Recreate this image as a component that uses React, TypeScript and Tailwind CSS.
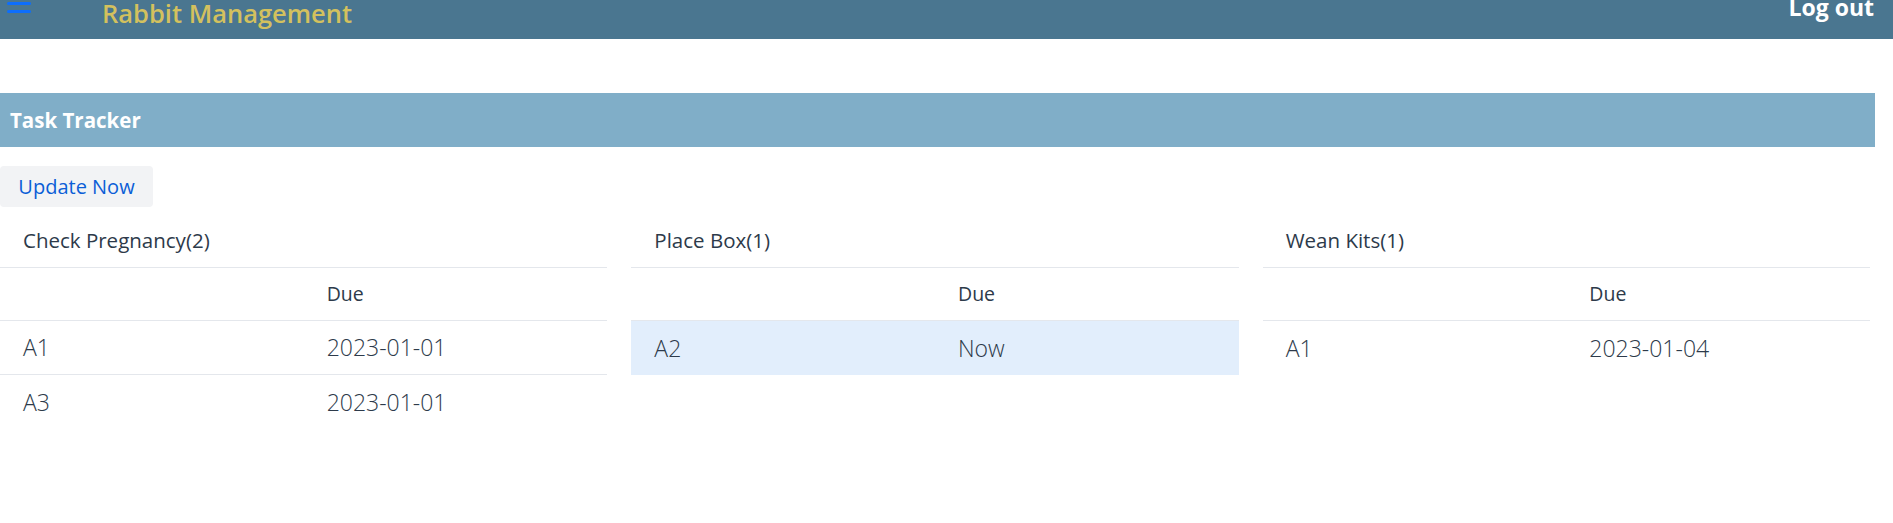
const tasks = [
  { title: "Check Pregnancy(2)", rows: [["A1", "2023-01-01"], ["A3", "2023-01-01"]] },
  { title: "Place Box(1)", rows: [["A2", "Now"]], highlight: true },
  { title: "Wean Kits(1)", rows: [["A1", "2023-01-04"]] },
];

function TaskTable({ title, rows, highlight }: { title: string; rows: string[][]; highlight?: boolean }) {
  return (
    <div className="text-[#2d3a4a]">
      <div className="h-[54px] flex items-center px-[23px] text-[20.5px] border-b border-[#e4e7ec]">{title}</div>
      <div className="h-[53px] grid grid-cols-2 items-center border-b border-[#e4e7ec] text-[19.5px]">
        <div className="px-[23px]" />
        <div className="px-[23px]">Due</div>
      </div>
      {rows.map((r, i) => (
        <div
          key={i}
          className={`h-[54px] grid grid-cols-2 items-center text-[23px] font-light ${
            i < rows.length - 1 ? "border-b border-[#e4e7ec]" : ""
          } ${highlight ? "bg-[#e2eefc]" : ""}`}
        >
          <div className="px-[23px]">{r[0]}</div>
          <div className="px-[23px]">{r[1]}</div>
        </div>
      ))}
    </div>
  );
}

export default function App() {
  return (
    <div className="w-[1893px] h-[523px] bg-white overflow-hidden font-['Open_Sans','Noto_Sans',sans-serif]">
      {/* Top navbar */}
      <header className="h-[39px] bg-[#4a7690] flex items-start">
        <div className="pl-[7px] pt-[2px] flex flex-col gap-[5px]">
          <span className="block w-[24px] h-[3px] rounded bg-[#0d6efd]" />
          <span className="block w-[24px] h-[3px] rounded bg-[#0d6efd]" />
        </div>
        <div className="ml-[71px] -mt-[5px] text-[25.5px] font-semibold text-[#d3c15e] leading-[36px]">Rabbit Management</div>
        <div className="ml-auto mr-[19px] -mt-[4px] text-[23px] font-bold text-white leading-[23px]">Log out</div>
      </header>

      <main className="w-[1875px] pt-[54px]">
        <div className="h-[54px] bg-[#80aec8] flex items-center px-[10px] text-white font-bold text-[20.5px]">Task Tracker</div>
        <button className="mt-[19px] h-[41px] w-[153px] rounded-[4px] bg-[#f2f3f5] text-[#0b5ed7] text-[20px]">Update Now</button>
        <div className="mt-[7px] w-[1870px] grid grid-cols-3 gap-[24px]">
          {tasks.map((t) => (
            <TaskTable key={t.title} {...t} />
          ))}
        </div>
      </main>
    </div>
  );
}
